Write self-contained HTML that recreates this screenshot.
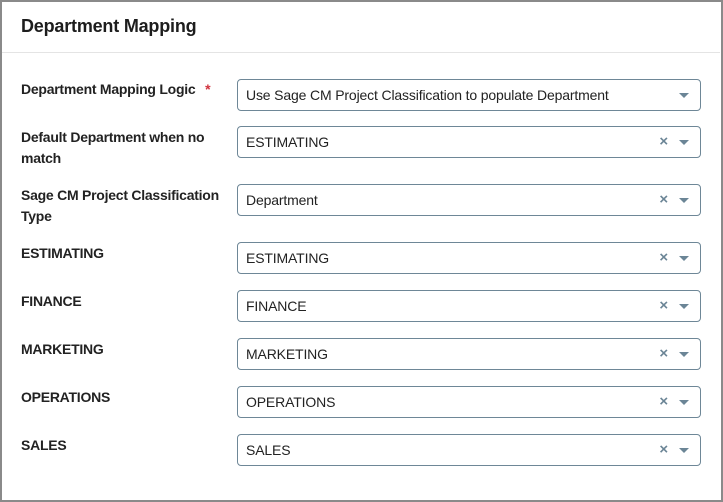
<!DOCTYPE html><html><head><style>
body{margin:0;width:723px;height:502px;overflow:hidden;background:#fff;font-family:"Liberation Sans",sans-serif;}
.outer{position:absolute;left:0;top:0;width:719px;height:498px;border:2px solid #8a8a8a;border-right-width:3px;border-bottom-width:2px;}
.title{position:absolute;left:21px;top:16px;font-size:18px;font-weight:bold;color:#1d1d1d;letter-spacing:-0.2px}
.hr{position:absolute;left:2px;right:3px;top:52px;border-top:1px solid #e4e4e4;}
.lab{position:absolute;left:21px;font-size:14px;font-weight:bold;color:#222;line-height:21px;width:212px;letter-spacing:-0.25px}
.box{position:absolute;left:237px;width:462px;height:30px;border:1px solid #6e8797;border-radius:4px;font-size:14px;color:#222;line-height:30px;letter-spacing:-0.15px}
.box span{position:absolute;left:8px}
.ar{position:absolute;right:11px;top:13px;width:0;height:0;border-left:5px solid transparent;border-right:5px solid transparent;border-top:5px solid #6b8596;}
.x{position:absolute;right:32px;top:0;color:#6b8596;font-weight:bold;font-size:15px;}
.req{color:#d0313d;margin-left:6px}
</style></head><body>
<div class="outer"></div>
<div class="title">Department Mapping</div>
<div class="hr"></div>
<div class="lab" style="top:79px">Department Mapping Logic <span class="req">*</span></div>
<div class="box" style="top:79px"><span>Use Sage CM Project Classification to populate Department</span><i class="ar"></i></div>
<div class="lab" style="top:127px">Default Department when no match</div>
<div class="box" style="top:126px"><span>ESTIMATING</span><b class="x">×</b><i class="ar"></i></div>
<div class="lab" style="top:185px">Sage CM Project Classification Type</div>
<div class="box" style="top:184px"><span>Department</span><b class="x">×</b><i class="ar"></i></div>
<div class="lab" style="top:243px">ESTIMATING</div>
<div class="box" style="top:242px"><span>ESTIMATING</span><b class="x">×</b><i class="ar"></i></div>
<div class="lab" style="top:291px">FINANCE</div>
<div class="box" style="top:290px"><span>FINANCE</span><b class="x">×</b><i class="ar"></i></div>
<div class="lab" style="top:339px">MARKETING</div>
<div class="box" style="top:338px"><span>MARKETING</span><b class="x">×</b><i class="ar"></i></div>
<div class="lab" style="top:387px">OPERATIONS</div>
<div class="box" style="top:386px"><span>OPERATIONS</span><b class="x">×</b><i class="ar"></i></div>
<div class="lab" style="top:435px">SALES</div>
<div class="box" style="top:434px"><span>SALES</span><b class="x">×</b><i class="ar"></i></div>
</body></html>
